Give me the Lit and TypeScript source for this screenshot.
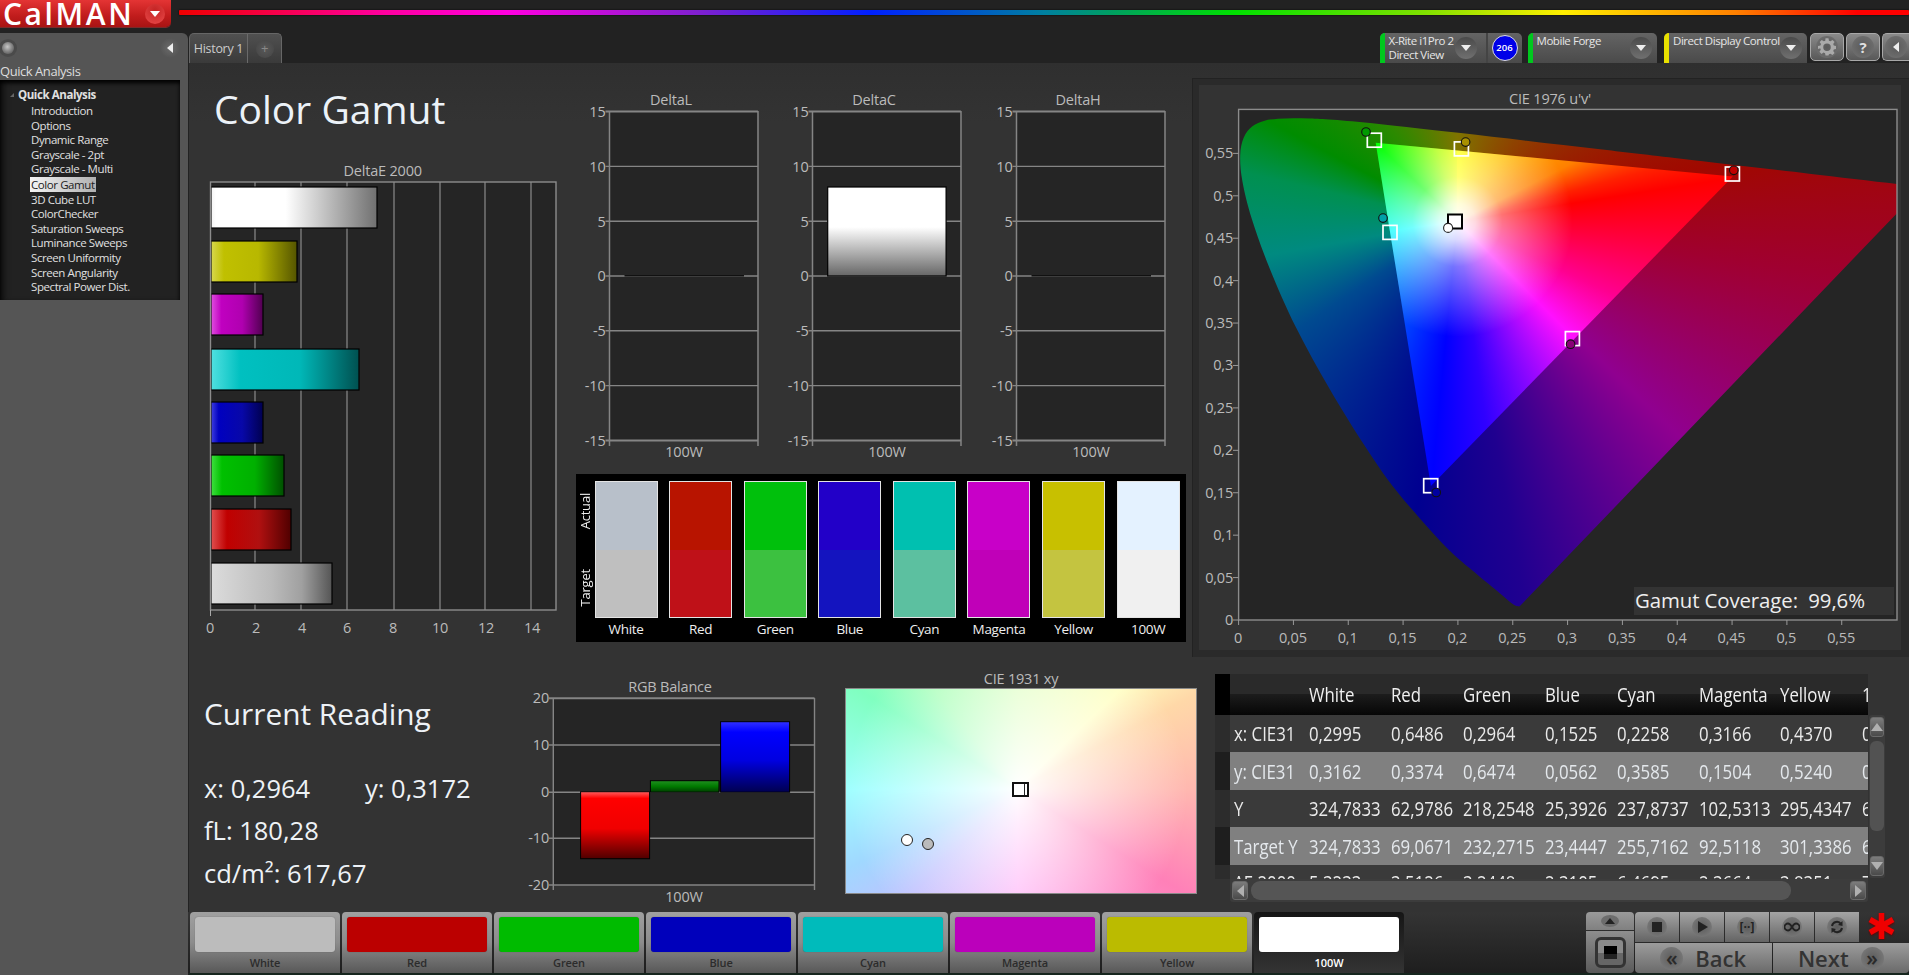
import { LitElement, html, svg, css } from "lit";
import { customElement } from "lit/decorators.js";

const TREE = ["Introduction","Options","Dynamic Range","Grayscale - 2pt","Grayscale - Multi","Color Gamut","3D Cube LUT","ColorChecker","Saturation Sweeps","Luminance Sweeps","Screen Uniformity","Screen Angularity","Spectral Power Dist."];

const BARS = [
  { id:"bw", y:187, r:377, s:[["0","#f4f4f4"],[".03","#fff"],[".45","#fff"],["1","#707070"]] },
  { id:"by", y:241, r:297, s:[["0","#d8d850"],[".15","#c0c000"],[".55","#b8b800"],["1","#555500"]] },
  { id:"bm", y:294, r:263, s:[["0","#e050e0"],[".2","#c000c0"],[".6","#b000b0"],["1","#500050"]] },
  { id:"bc", y:349, r:359, s:[["0","#50e0e0"],[".2","#00c0c0"],[".6","#00b8b8"],["1","#005050"]] },
  { id:"bb", y:402, r:263, s:[["0","#4040e0"],[".15","#0000c0"],[".6","#0808a8"],["1","#000050"]] },
  { id:"bg", y:455, r:284, s:[["0","#40e040"],[".15","#00c000"],[".6","#00b000"],["1","#005000"]] },
  { id:"br", y:509, r:291, s:[["0","#e05050"],[".2","#c00000"],[".6","#b01010"],["1","#500000"]] },
  { id:"bk", y:563, r:332, s:[["0","#dcdcdc"],[".5","#bbbbbb"],[".75","#a0a0a0"],["1","#555"]] },
];

const SWATCHES = [
  ["White","#b8c0ca","#bfbfbf"],["Red","#b81400","#bf1118"],["Green","#00c00c","#3cc140"],["Blue","#2200c8","#1414bf"],
  ["Cyan","#00c0b0","#5cc0a0"],["Magenta","#c800c8","#c000b8"],["Yellow","#c8c000","#c4c440"],["100W","#e4f2ff","#f0f0f0"],
];

const PATCHES = [["White","#bcbcbc"],["Red","#bb0000"],["Green","#00bb00"],["Blue","#0000bb"],["Cyan","#00bbbb"],["Magenta","#bb00bb"],["Yellow","#bbbb00"]];

const HEAD = ["","White","Red","Green","Blue","Cyan","Magenta","Yellow","100W"];
const ROWS = [
  ["x: CIE31","0,2995","0,6486","0,2964","0,1525","0,2258","0,3166","0,4370","0,2964"],
  ["y: CIE31","0,3162","0,3374","0,6474","0,0562","0,3585","0,1504","0,5240","0,3172"],
  ["Y","324,7833","62,9786","218,2548","25,3926","237,8737","102,5313","295,4347","617,6700"],
  ["Target Y","324,7833","69,0671","232,2715","23,4447","255,7162","92,5118","301,3386","617,6700"],
  ["ΔE 2000","5,3233","3,5126","3,2448","2,3105","6,4695","2,3664","3,8351","7,2000"],
];

// CIE 1931 spectral locus (x, y)
const LOCUS = [[.1741,.0050],[.1733,.0048],[.1714,.0051],[.1689,.0069],[.1644,.0109],[.1566,.0177],[.1440,.0297],[.1241,.0578],[.1096,.0868],[.0913,.1327],[.0687,.2007],[.0454,.2950],[.0235,.4127],[.0082,.5384],[.0039,.6548],[.0139,.7502],[.0389,.8120],[.0743,.8338],[.1142,.8262],[.1547,.8059],[.1929,.7816],[.2296,.7543],[.3016,.6923],[.3731,.6245],[.4441,.5547],[.5125,.4866],[.5752,.4242],[.6270,.3725],[.6915,.3083],[.7347,.2653]];
const PW = 658, PH = 510.6, UX = 1096.6, VY = 848.4;
const uvPx = (u: number, v: number): [number, number] => [u * UX, PH - v * VY];
const locusPts = LOCUS.map(([x, y]) => {
  const d = -2 * x + 12 * y + 3;
  return uvPx((4 * x) / d, ((9 * y) / d) * 1.008);
});
function smoothPath(p: [number, number][]) {
  let d = `M${p[0][0].toFixed(1)} ${p[0][1].toFixed(1)}`;
  for (let i = 0; i < p.length - 1; i++) {
    const a = p[Math.max(i - 1, 0)], b = p[i], c = p[i + 1], e = p[Math.min(i + 2, p.length - 1)];
    const c1 = [b[0] + (c[0] - a[0]) / 6, b[1] + (c[1] - a[1]) / 6];
    const c2 = [c[0] - (e[0] - b[0]) / 6, c[1] - (e[1] - b[1]) / 6];
    d += `C${c1[0].toFixed(1)} ${c1[1].toFixed(1)} ${c2[0].toFixed(1)} ${c2[1].toFixed(1)} ${c[0].toFixed(1)} ${c[1].toFixed(1)}`;
  }
  return d + "Z";
}
const HORSESHOE = smoothPath(locusPts);
const TRI = [uvPx(.4507,.5229), uvPx(.125,.5625), uvPx(.1754,.1579)].map(p => `${p[0].toFixed(1)} ${p[1].toFixed(1)}`);
const TRIPATH = `M${TRI[0]}L${TRI[1]}L${TRI[2]}Z`;

const SQUARES: [number, number, string][] = [[1374.3,140.2,"#fff"],[1461.4,148.9,"#fff"],[1732.4,174,"#fff"],[1390,232.4,"#fff"],[1572.4,338.6,"#fff"],[1430.7,485.7,"#fff"]];
const CIRCLES: [number, number, string][] = [[1366,132,"#009a00"],[1465.6,142.1,"#a89000"],[1733.8,170.3,"#c00000"],[1383,218.1,"#00a0a8"],[1570.6,344.2,"#8a0078"],[1436.2,492.5,"#0000a0"]];

const GAMUT_X = [0,.05,.1,.15,.2,.25,.3,.35,.4,.45,.5,.55];
const dec = (n: number) => String(+n.toFixed(2)).replace(".", ",");

function deltaChart(title: string, bar: boolean) {
  const x0 = 34.5, w = 148.5;
  const lines = [[15,111.6],[10,166.4],[5,221.2],[0,276],[-5,330.8],[-10,385.6],[-15,440.4]] as const;
  return html`<svg class="dchart" viewBox="0 85 203.4 380" width="203.4" height="380">
    <text class="lbl" x=${x0 + 61.5} y="105.5" text-anchor="middle">${title}</text>
    <rect x=${x0} y="111.6" width=${w} height="328.8" fill="#252525"></rect>
    ${lines.map(([v, y]) => svg`
      <line x1=${x0 - 4} x2=${x0 + w} y1=${y} y2=${y} stroke="#858585" stroke-width=${v === 15 || v === -15 ? 2 : 1.4}></line>
      <text class="lbl" x=${x0 - 4} y=${y + 5.5} text-anchor="end">${v}</text>`)}
    <line x1=${x0} x2=${x0} y1="111" y2="446" stroke="#858585" stroke-width="1.5"></line>
    <line x1=${x0 + w} x2=${x0 + w} y1="111" y2="446" stroke="#858585" stroke-width="1.5"></line>
    ${bar ? svg`<rect x=${x0 + 15.2} y="187" width="118.4" height="89" fill="url(#dc)" stroke="#000" stroke-width="1.2"></rect>`
          : svg`<line x1=${x0 + 15} x2=${x0 + 134.5} y1="275.8" y2="275.8" stroke="#111" stroke-width="1.4"></line>`}
    <text class="lbl" x=${x0 + 74.5} y="457" text-anchor="middle">100W</text>
    <defs><linearGradient id="dc" x1="0" y1="0" x2="0" y2="1"><stop offset="0" stop-color="#fff"></stop><stop offset=".45" stop-color="#fff"></stop><stop offset="1" stop-color="#666"></stop></linearGradient></defs>
  </svg>`;
}

@customElement("app-root")
export class AppRoot extends LitElement {
  static styles = css`
    :host { display:block; width:1909px; height:975px; background:#222; overflow:hidden; font-family:"Open Sans","Noto Sans",sans-serif; color:#ddd; }
    * { box-sizing:border-box; }
    .page { display:flex; flex-direction:column; height:975px; }
    .top { display:flex; height:33px; flex:none; }
    .logo { width:171px; height:27px; background:linear-gradient(#e43434,#c01c1c 60%,#a81414); border-radius:0 0 5px 0; display:flex; align-items:center; padding-left:3px; box-shadow:0 1px 0 #7a2a2a; }
    .logo b { font-size:30px; font-weight:600; letter-spacing:2.6px; color:#fff; line-height:27px; white-space:nowrap; }
    .logo i { margin-left:auto; margin-right:6px; width:20px; height:20px; border-radius:50%; background:radial-gradient(circle at 50% 30%,#c42424,#ea4a4a); display:flex; align-items:center; justify-content:center; }
    .logo i::after { content:""; border:5px solid transparent; border-top:6px solid #fff; border-bottom:0; }
    .rainbow { flex:1; margin:10px 0 0 8px; height:5px; border-radius:1px; background:linear-gradient(90deg,#f00000 0,#ff00a0 12%,#ff00e0 19%,#8020d0 30%,#0020ff 40%,#0080a0 50%,#00a060 54%,#00e000 61%,#80e000 72%,#ffee00 80%,#ff8000 90%,#ff0000 97%); box-shadow:0 0 2px #000; }
    .body { flex:1; display:flex; min-height:0; }
    .side { width:188px; flex:none; background:#555; border-radius:0 6px 0 0; }
    .side-tools { height:30px; display:flex; align-items:center; justify-content:space-between; padding:0 8px 0 0; }
    .ball { width:12px; height:12px; margin-left:2px; border-radius:50%; background:radial-gradient(circle at 45% 40%,#c8c8c8,#888 45%,#444); box-shadow:0 0 0 3px #4a4a4a; }
    .back { width:20px; height:20px; border-radius:50%; background:radial-gradient(circle,#6a6a6a,#4c4c4c); display:flex; align-items:center; justify-content:center; }
    .back::after { content:""; border:5.5px solid transparent; border-right:6px solid #eee; border-left:0; }
    .side h3 { margin:0; font-size:13px; font-weight:400; line-height:17px; height:17px; color:#ddd; letter-spacing:-.45px; white-space:nowrap; }
    .tree { width:180px; height:220px; background:#222; box-shadow:inset 0 3px 4px #000, inset 8px 0 6px -4px #111; padding:8px 0 0 10px; font-size:11.5px; line-height:14.6px; color:#e0e0e0; letter-spacing:-.42px; }
    .tree .h { font-weight:700; display:flex; align-items:center; gap:4px; margin-bottom:1.5px; white-space:nowrap; }
    .tree .h::before { content:""; border:2.5px solid transparent; border-right-color:#666; border-bottom-color:#666; }
    .tree .it { padding-left:21px; white-space:nowrap; }
    .tree .sel { display:inline-block; background:linear-gradient(90deg,#f4f4f4,#b0b0b0); color:#222; margin-left:-1px; padding:0 1px; line-height:15px; }

    .work { flex:1; min-width:0; display:flex; flex-direction:column; margin-left:1px; }
    .tabs { height:30px; flex:none; display:flex; }
    .htab { display:flex; height:30px; border:1px solid #666; border-bottom:0; border-radius:5px 5px 0 0; background:linear-gradient(#505050,#3a3a3a); font-size:12.5px; color:#ccc; letter-spacing:-.3px; }
    .htab span { width:58px; display:flex; align-items:center; justify-content:center; border-right:1px solid #6a6a6a; }
    .htab em { width:33px; display:flex; align-items:center; justify-content:center; }
    .htab em b { width:18px; height:18px; border-radius:50%; background:radial-gradient(circle,#585858,#444); font-weight:400; font-style:normal; font-size:13px; color:#888; line-height:17px; text-align:center; }
    .spacer { flex:1; }
    .dev { height:30px; margin-right:6px; border-radius:5px 5px 0 0; background:linear-gradient(#646464,#4a4a4a); display:flex; position:relative; overflow:hidden; font-size:11.5px; line-height:14px; color:#e6e6e6; letter-spacing:-.45px; }
    .dev .bar { width:5px; flex:none; }
    .dev .txt { padding:1px 0 0 4px; white-space:nowrap; flex:1; }
    .dd { width:22px; height:22px; flex:none; border-radius:50%; align-self:center; background:linear-gradient(#4a4a4a,#707070); display:flex; align-items:center; justify-content:center; }
    .dd::after { content:""; border:5.5px solid transparent; border-top:6px solid #eee; border-bottom:0; }
    .d1 { width:142px; } .d2 { width:129.5px; margin-right:7px; } .d3 { width:143px; margin-right:3px; }
    .d1 .dd { margin:0 9px 0 0; } .d2 .dd { margin-right:5px; } .d3 .dd { margin-right:5px; }
    .badge { width:36px; flex:none; border-left:2px solid #444; display:flex; align-items:center; justify-content:center; }
    .badge b { width:26px; height:26px; border-radius:50%; background:#0000e8; border:1px solid #ddd; color:#fff; font-size:9.5px; font-weight:600; display:flex; align-items:center; justify-content:center; letter-spacing:0; }
    .tool { width:34px; height:28px; margin-right:2px; border:1px solid #a8a8a8; border-radius:5px; background:linear-gradient(#8a8a8a,#585858); display:flex; align-items:center; justify-content:center; }
    .tool i { width:22px; height:22px; border-radius:50%; background:radial-gradient(circle,#5a5a5a,#747474); display:flex; align-items:center; justify-content:center; font-style:normal; font-weight:700; font-size:15px; color:#e0e0e0; }
    .tool.last { width:27px; margin-right:0; border-right:0; border-radius:5px 0 0 5px; }
    .tool.last i::after { content:""; border:5.5px solid transparent; border-right:6px solid #eee; border-left:0; }

    .main { flex:1; min-height:0; background:linear-gradient(#2f2f2f,#333 60px); border-left:1px solid #222; display:flex; flex-direction:column; margin-left:-1px; }
    .upper { height:594px; flex:none; display:flex; }
    .col-a { width:386px; flex:none; }
    .bigt { height:97px; font-size:39px; line-height:52px; padding:20px 0 0 25px; color:#ecf2f8; white-space:nowrap; }
    .col-a svg { display:block; margin-left:1px; }
    .col-b { width:617px; flex:none; padding-top:22px; }
    .dcharts { display:flex; height:380px; margin-bottom:9px; }
    svg text { font-family:"Open Sans","Noto Sans",sans-serif; }
    .lbl { font-size:14.5px; fill:#bbb; letter-spacing:-.2px; }
    .swbox { width:610px; height:168px; margin-left:1px; background:#000; display:flex; padding:7px 0 0 0; }
    .vl { width:18.5px; flex:none; height:137px; display:flex; flex-direction:column; justify-content:space-between; align-items:center; }
    .vl span { writing-mode:vertical-rl; transform:rotate(180deg); font-size:13px; line-height:13px; color:#eee; letter-spacing:-.2px; }
    .vl .a { margin-top:12px; } .vl .t { margin-bottom:12px; }
    .sw { width:63px; margin-right:11.6px; flex:none; display:flex; flex-direction:column; }
    .sw .chip { height:137px; border:1.5px solid #e4e4e4; display:flex; flex-direction:column; }
    .sw .chip i { flex:1; display:block; }
    .sw label { font-size:13.5px; line-height:23px; text-align:center; color:#eee; letter-spacing:-.35px; white-space:nowrap; }
    .col-c { flex:1; padding-top:15px; }
    .gframe { height:579px; background:#2a2a2a; border-top:1px solid #222; border-left:1px solid #222; padding:6px 8px 7px 6px; }
    .gframe svg { display:block; background:#333; }
    .fo-dark, .fo-bright { width:658px; height:511px; }
    .fo-dark { background:conic-gradient(from 0deg at 218.4px 112.6px,#7f7400 0deg,#a00800 78deg,#a00030 98deg,#900090 134deg,#200090 170deg,#000090 188deg,#004a90 236deg,#008a80 260deg,#009050 283deg,#008c00 298deg,#2a8a00 324deg,#7f7400 360deg); }
    .fo-bright { background:radial-gradient(circle at 218.4px 112.6px,#fff 0,rgba(255,255,255,.85) 18px,rgba(255,255,255,.45) 45px,rgba(255,255,255,0) 115px),conic-gradient(from 0deg at 218.4px 112.6px,#ffff00 3deg,#ffc000 35deg,#ff8000 63deg,#ff2000 75deg,#ff0000 81deg,#ff0090 115deg,#ff10ff 135deg,#3000ff 172deg,#0000ff 185.6deg,#0080ff 225deg,#00ffff 262deg,#00ff80 290deg,#00ff00 314deg,#b0ff00 345deg,#ffff00 363deg); }
    .cov { font-size:20.4px; fill:#eee; white-space:pre; letter-spacing:-.1px; }

    .lower { flex:1; min-height:0; display:flex; }
    .reading { width:321px; flex:none; padding:36.5px 0 0 15px; color:#eef2f6; }
    .reading h2 { margin:0 0 33px; font-size:29.8px; font-weight:400; line-height:40px; white-space:nowrap; }
    .reading div { font-size:25.5px; line-height:42.6px; display:flex; white-space:nowrap; }
    .reading div span { width:161px; flex:none; }
    .rgb { display:block; flex:none; }
    .cie { width:352px; flex:none; margin-left:15px; padding-top:13px; }
    .cie h4 { margin:0; font-size:14.5px; line-height:18px; font-weight:400; text-align:center; color:#bbb; letter-spacing:-.2px; }
    .ciebox { position:relative; height:206px; border:1.5px solid #8a8a8a; background:radial-gradient(circle at 49% 49%,#fff 0,rgba(255,255,255,.8) 30px,rgba(255,255,255,0) 170px),conic-gradient(from 0deg at 49% 49%,#ddffc0 0deg,#ffffc0 46deg,#ffd8a8 62deg,#ffb8b0 90deg,#ff80b8 122deg,#ffb0f8 180deg,#c0c0ff 225deg,#a0d8ff 245deg,#a0ffff 270deg,#80ffc0 302deg,#a8ffb8 320deg,#ddffc0 360deg); }
    .pin { position:absolute; }
    .p-sq { left:166px; top:92.5px; width:17px; height:15px; border:2px solid #111; background:linear-gradient(90deg,#fff 80%,#222 80%,#222 86%,#fff 86%); }
    .p-a { left:54.5px; top:144.5px; width:10px; height:10px; border-radius:50%; background:#fff; border:1.2px solid #222; box-sizing:content-box; }
    .p-b { left:76px; top:148.5px; width:10px; height:10px; border-radius:50%; background:#bbb; border:1.2px solid #222; box-sizing:content-box; }

    .tw { margin-left:18px; margin-top:17px; display:grid; grid-template-columns:653px 17px; grid-template-rows:205px 23px; }
    .tbl { overflow:hidden; font-size:20px; display:flex; flex-direction:column; }
    .row { display:flex; flex:none; align-items:center; }
    .row > b { width:15px; height:100%; flex:none; }
    .row > span { flex:none; white-space:nowrap; height:100%; display:flex; align-items:center; overflow:visible; }
    .row > span > u { text-decoration:none; display:inline-block; transform:scaleX(.84); transform-origin:0 50%; white-space:nowrap; }
    .row > span:nth-of-type(1){width:79px;padding-left:4.4px} .c1{width:81.5px}.c2{width:72.5px}.c3{width:81.8px}.c4{width:71.9px}.c5{width:81.9px}.c6{width:81.4px}.c7{width:82px}.c8{width:60px}
    .thead { height:41px; background:linear-gradient(#2a2a2a 0,#2a2a2a 48%,#1c1c1c 50%,#060606 100%); color:#f0f0f0; }
    .thead > b { background:#000; }
    .r0 { height:37px; background:#3a3a3a; color:#eaeaea; }
    .r1 { height:38px; background:#808080; color:#e4e8ec; }
    .rl { height:35px; background:#3a3a3a; color:#eaeaea; }
    .r0 > b, .rl > b { background:#2c2c2c; } .r1 > b { background:#1e1e1e; }
    .vs { margin:41px 0 0 1px; height:163px; background:#3c3c3c; border-radius:3px; display:flex; flex-direction:column; padding:2px 1px; }
    .sbtn { height:20px; flex:none; border:1px solid #6a6a6a; border-radius:3px; background:linear-gradient(#7c7c7c,#4a4a4a); display:flex; align-items:center; justify-content:center; }
    .up::after { content:""; border:6px solid transparent; border-bottom:8px solid #b0b0b0; border-top:0; }
    .dn::after { content:""; border:6px solid transparent; border-top:8px solid #b0b0b0; border-bottom:0; }
    .vth { display:block; margin:4px 0; height:90px; flex:none; background:#525252; border-radius:6px; }
    .vs .sp { flex:1; display:block; }
    .hs { margin-left:15px; height:23px; background:#3c3c3c; display:flex; padding:2px; gap:3px; border-radius:0 0 3px 3px; grid-column:1; }
    .hs .sbtn { width:16px; height:100%; }
    .lf::after { content:""; border:6px solid transparent; border-right:7px solid #b0b0b0; border-left:0; }
    .rt::after { content:""; border:6px solid transparent; border-left:7px solid #b0b0b0; border-right:0; }
    .hth { width:540px; flex:none; background:#555; border-radius:9px; }

    .foot { height:61px; flex:none; background:linear-gradient(#343434,#1e1e1e); display:flex; margin-left:-1px; padding-left:1px; }
    .patches { display:flex; gap:2px; flex:none; padding-left:1px; }
    .patch { width:150px; height:61px; border-radius:4px 4px 0 0; background:linear-gradient(#a0a0a0,#8c8c8c 50%,#585858); padding:5px 5px 0; display:flex; flex-direction:column; }
    .patch i { display:block; height:36px; border-radius:3px; box-shadow:0 0 1px #0006; }
    .patch span { font-size:11px; font-weight:600; line-height:21px; text-align:center; color:#2c2c2c; letter-spacing:-.1px; }
    .patch.on { background:linear-gradient(#151515,#343434); }
    .patch.on span { color:#fff; }
    .ctrl { width:323px; flex:none; margin-left:auto; display:flex; }
    .cl { width:48px; flex:none; margin-right:1px; display:flex; flex-direction:column; gap:1px; }
    .btn { background:linear-gradient(#a4a4a4,#646464); display:flex; align-items:center; justify-content:center; color:#333; }
    .cl .a { height:18px; border-radius:4px 4px 0 0; background:linear-gradient(#9a9a9a,#808080); }
    .cl .b { flex:1; border-radius:0 0 4px 4px; background:linear-gradient(#8e8e8e,#5a5a5a); }
    .knob { width:20px; height:20px; border-radius:50%; background:radial-gradient(circle,#5c5c5c,#808080); display:flex; align-items:center; justify-content:center; flex:none; font-size:12px; line-height:20px; font-weight:700; color:#222; }
    .kup { width:18px; height:12px; border-radius:50%; background:#6c6c6c; display:flex; align-items:center; justify-content:center; }
    .kup::after { content:""; border:5px solid transparent; border-bottom:6px solid #222; border-top:0; }
    .sbig { width:31px; height:31px; border:3px solid #333; border-radius:6px; background:linear-gradient(#8a8a8a 50%,#666 50%); display:flex; align-items:center; justify-content:center; }
    .sbig::after { content:""; width:13px; height:13px; background:linear-gradient(#000 60%,#222 60%); }
    .cr { flex:1; display:flex; flex-direction:column; gap:1px; }
    .r-a { height:30px; display:flex; gap:1px; flex:none; }
    .r-a .btn { width:44px; border-radius:0; }
    .r-a .btn:first-child { border-radius:4px 0 0 0; }
    .star { margin-left:8px; display:block; }
    .r-b { flex:1; display:flex; gap:1px; }
    .r-b .btn { width:136.5px; border-radius:0 0 0 4px; font-size:22px; font-weight:600; gap:12px; color:#333; background:linear-gradient(#9c9c9c,#6a6a6a); }
    .r-b .btn:last-child { border-radius:0 0 4px 0; }
    .r-b .knob { font-size:21px; font-weight:600; line-height:19px; width:23px; height:23px; color:#2a2a2a; }
    .strip { height:2px; flex:none; background:#16261e; }
  `;

  private tbl() {
    return html`<div class="tbl">
      <div class="row thead"><b></b>${HEAD.map((h, i) => html`<span class=${"c" + i}><u>${h}</u></span>`)}</div>
      ${ROWS.map((r, ri) => html`<div class=${"row " + (ri === 4 ? "rl" : ri % 2 ? "r1" : "r0")}>
        <b></b>${r.map((v, i) => html`<span class=${"c" + i}><u>${v}</u></span>`)}</div>`)}
    </div>`;
  }

  render() {
    return html`<div class="page">
      <div class="top">
        <div class="logo"><b>CalMAN</b><i></i></div>
        <div class="rainbow"></div>
      </div>
      <div class="body">
        <aside class="side">
          <div class="side-tools"><span class="ball"></span><span class="back"></span></div>
          <h3>Quick Analysis</h3>
          <div class="tree">
            <div class="h">Quick Analysis</div>
            ${TREE.map(t => html`<div class="it">${t === "Color Gamut" ? html`<span class="sel">${t}</span>` : t}</div>`)}
          </div>
        </aside>
        <div class="work">
          <div class="tabs">
            <div class="htab"><span>History 1</span><em><b>+</b></em></div>
            <div class="spacer"></div>
            <div class="dev d1"><i class="bar" style="background:#00c81e"></i><div class="txt">X-Rite i1Pro 2<br />Direct View</div><span class="dd"></span><div class="badge"><b>206</b></div></div>
            <div class="dev d2"><i class="bar" style="background:#00c81e"></i><div class="txt">Mobile Forge</div><span class="dd"></span></div>
            <div class="dev d3"><i class="bar" style="background:#e8e000"></i><div class="txt">Direct Display Control</div><span class="dd"></span></div>
            <div class="tool"><i><svg width="18" height="18" viewBox="0 0 24 24"><path fill="#aaa" fill-rule="evenodd" d="M10 1h4l.6 3.2 2 .8L19.3 3.2l2.8 2.8-1.8 2.7.8 2 3.2.6v4l-3.2.6-.8 2 1.8 2.7-2.8 2.8-2.7-1.8-2 .8L14 24h-4l-.6-3.2-2-.8-2.7 1.8-2.8-2.8 1.8-2.7-.8-2L0 15.2v-4l3.2-.6.8-2L2.200 6l2.800-2.800L7.700 5l2-.8zM12 8a5 5 0 1 0 0 10 5 5 0 0 0 0-10z" transform="translate(0 -.6)"></path></svg></i></div>
            <div class="tool"><i>?</i></div>
            <div class="tool last"><i></i></div>
          </div>
          <div class="main">
            <div class="upper">
              <section class="col-a">
                <div class="bigt">Color Gamut</div>
                <svg viewBox="190 160 380 490" width="380" height="490">
                  <defs>${BARS.map(b => svg`<linearGradient id=${b.id}>${b.s.map(([o, c]) => svg`<stop offset=${o} stop-color=${c}></stop>`)}</linearGradient>`)}</defs>
                  <text class="lbl" x="382.7" y="176" text-anchor="middle">DeltaE 2000</text>
                  <rect x="210.5" y="182" width="345.5" height="428" fill="#252525"></rect>
                  ${[255,301,347,394,440,485,531].map(x => svg`<line x1=${x} x2=${x} y1="182" y2="610" stroke="#7c7c7c" stroke-width="1.4"></line>`)}
                  ${BARS.map(b => svg`<rect x="211" y=${b.y} width=${b.r - 211} height="41" fill=${"url(#" + b.id + ")"} stroke="#000" stroke-width="1.2"></rect>`)}
                  <rect x="210.5" y="182" width="345.5" height="428" fill="none" stroke="#8c8c8c" stroke-width="1.4"></rect>
                  <line x1="210.500" x2="210.500" y1="610" y2="616" stroke="#aaa" stroke-width="1"></line>
                  ${[[0,210],[2,256],[4,302],[6,347],[8,393],[10,440],[12,486],[14,532]].map(([v, x]) => svg`<text class="lbl" x=${x} y="632.500" text-anchor="middle">${v}</text>`)}
                </svg>
              </section>
              <section class="col-b">
                <div class="dcharts">${deltaChart("DeltaL", false)}${deltaChart("DeltaC", true)}${deltaChart("DeltaH", false)}</div>
                <div class="swbox">
                  <div class="vl"><span class="a">Actual</span><span class="t">Target</span></div>
                  ${SWATCHES.map(([n, a, t]) => html`<div class="sw"><div class="chip"><i style=${"background:" + a}></i><i style=${"background:" + t}></i></div><label>${n}</label></div>`)}
                </div>
              </section>
              <section class="col-c">
                <div class="gframe">
                  <svg viewBox="1199 85 702 565" width="702" height="565">
                    <text class="lbl" x="1550" y="104" text-anchor="middle">CIE 1976 u'v'</text>
                    <rect x="1238.600" y="109.400" width="658.400" height="510.600" fill="#252525"></rect>
                    <foreignObject x="1238.6" y="109.4" width="658" height="511">
                      <div class="fo-dark" style=${`clip-path:path('${HORSESHOE}')`}></div>
                    </foreignObject>
                    <foreignObject x="1238.6" y="109.4" width="658" height="511">
                      <div class="fo-bright" style=${`clip-path:path('${TRIPATH}')`}></div>
                    </foreignObject>
                    <rect x="1238.600" y="109.400" width="658.400" height="510.600" fill="none" stroke="#8c8c8c" stroke-width="1.4"></rect>
                    ${GAMUT_X.map((u, i) => svg`
                      <line x1=${1238.6 + u * UX} x2=${1238.6 + u * UX} y1="620" y2="625" stroke="#999" stroke-width="1"></line>
                      <text class="lbl" x=${1238 + u * UX} y="643" text-anchor="middle">${dec(GAMUT_X[i])}</text>`)}
                    ${GAMUT_X.map(v => svg`
                      <line x1="1233" x2="1238.6" y1=${620 - v * VY} y2=${620 - v * VY} stroke="#999" stroke-width="1"></line>
                      <text class="lbl" x="1233" y=${625 - v * VY} text-anchor="end">${dec(v)}</text>`)}
                    ${SQUARES.map(([x, y, c]) => svg`<rect x=${x - 7} y=${y - 7} width="14" height="14" fill="none" stroke=${c} stroke-width="1.7"></rect>`)}
                    <rect x="1448" y="214.500" width="14" height="14" fill="#fff" stroke="#000" stroke-width="2"></rect>
                    <circle cx="1448.100" cy="227.900" r="4.500" fill="#fff" stroke="#222" stroke-width="1.100"></circle>
                    ${CIRCLES.map(([x, y, c]) => svg`<circle cx=${x} cy=${y} r="4.300" fill=${c} stroke="#111" stroke-width="1.100"></circle>`)}
                    <rect x="1634" y="587" width="260" height="28" fill="#333"></rect>
                    <text class="cov" x="1635" y="608">Gamut Coverage:  99,6%</text>
                  </svg>
                </div>
              </section>
            </div>
            <div class="lower">
              <section class="reading">
                <h2>Current Reading</h2>
                <div><span>x: 0,2964</span>y: 0,3172</div>
                <div>fL: 180,28</div>
                <div>cd/m²: 617,67</div>
              </section>
              <svg class="rgb" viewBox="510 657 320 255" width="320" height="255">
                <defs>
                  <linearGradient id="gr" x1="0" y1="0" x2="0" y2="1"><stop offset="0" stop-color="#ff6060"></stop><stop offset=".1" stop-color="#ff0000"></stop><stop offset=".55" stop-color="#f00000"></stop><stop offset="1" stop-color="#500000"></stop></linearGradient>
                  <linearGradient id="gg" x1="0" y1="0" x2="0" y2="1"><stop offset="0" stop-color="#209020"></stop><stop offset=".5" stop-color="#007a00"></stop><stop offset="1" stop-color="#003c00"></stop></linearGradient>
                  <linearGradient id="gb" x1="0" y1="0" x2="0" y2="1"><stop offset="0" stop-color="#3030ff"></stop><stop offset=".15" stop-color="#0000ff"></stop><stop offset=".55" stop-color="#0000e0"></stop><stop offset="1" stop-color="#000050"></stop></linearGradient>
                </defs>
                <text class="lbl" x="670" y="691.500" text-anchor="middle">RGB Balance</text>
                <rect x="553.300" y="698.300" width="261.200" height="186.700" fill="#252525"></rect>
                ${[[20,698.3],[10,745],[0,792.3],[-10,838.3],[-20,885]].map(([v, y]) => svg`
                  <line x1="549" x2="814.500" y1=${y} y2=${y} stroke="#858585" stroke-width=${v === 20 ? 2 : 1.4}></line>
                  <text class="lbl" x="549" y=${y + 5} text-anchor="end">${v}</text>`)}
                <line x1="553.300" x2="553.300" y1="698" y2="890" stroke="#858585" stroke-width="1.400"></line>
                <line x1="814.500" x2="814.500" y1="698" y2="890" stroke="#858585" stroke-width="1.400"></line>
                <rect x="580.600" y="791.700" width="69" height="67" fill="url(#gr)" stroke="#000" stroke-width="1"></rect>
                <rect x="650.400" y="780.700" width="68.600" height="11.500" fill="url(#gg)" stroke="#000" stroke-width="1"></rect>
                <rect x="720.600" y="721.700" width="69" height="70.500" fill="url(#gb)" stroke="#000" stroke-width="1"></rect>
                <text class="lbl" x="684" y="902" text-anchor="middle">100W</text>
              </svg>
              <section class="cie">
                <h4>CIE 1931 xy</h4>
                <div class="ciebox"><span class="pin p-sq"></span><span class="pin p-a"></span><span class="pin p-b"></span></div>
              </section>
              <div class="tw">
                ${this.tbl()}
                <div class="vs"><i class="sbtn up"></i><i class="vth"></i><i class="sp"></i><i class="sbtn dn"></i></div>
                <div class="hs"><i class="sbtn lf"></i><i class="hth"></i><span class="spacer"></span><i class="sbtn rt"></i></div>
              </div>
            </div>
          </div>
          <div class="foot">
            <div class="patches">
              ${PATCHES.map(([n, c]) => html`<div class="patch"><i style=${"background:" + c}></i><span>${n}</span></div>`)}
              <div class="patch on"><i style="background:#fff"></i><span>100W</span></div>
            </div>
            <div class="ctrl">
              <div class="cl">
                <div class="btn a"><span class="kup"></span></div>
                <div class="btn b"><span class="sbig"></span></div>
              </div>
              <div class="cr">
                <div class="r-a">
                  <div class="btn"><span class="knob"><svg width="10" height="10"><rect width="10" height="10" fill="#222"></rect></svg></span></div>
                  <div class="btn"><span class="knob"><svg width="11" height="12"><polygon points="1,0 11,6 1,12" fill="#222"></polygon></svg></span></div>
                  <div class="btn"><span class="knob">[··]</span></div>
                  <div class="btn"><span class="knob"><svg width="16" height="10" viewBox="0 0 16 10" fill="none" stroke="#222" stroke-width="1.8"><path d="M8 5C6.500 2.500 5.500 1.500 4 1.500a3.500 3.500 0 0 0 0 7C5.500 8.500 6.500 7.500 8 5c1.500-2.500 2.500-3.500 4-3.500a3.500 3.500 0 0 1 0 7C10.500 8.500 9.500 7.500 8 5z"></path></svg></span></div>
                  <div class="btn"><span class="knob"><svg width="14" height="14" viewBox="0 0 14 14" fill="none" stroke="#222" stroke-width="2"><path d="M2 6a5 5 0 0 1 9-2"></path><path d="M12 8a5 5 0 0 1-9 2"></path><polygon points="12.500,1 12.500,6 8,5" fill="#222" stroke="none"></polygon><polygon points="1.500,13 1.500,8 6,9" fill="#222" stroke="none"></polygon></svg></span></div>
                  <svg class="star" width="27" height="28" viewBox="0 0 27 28"><g stroke="#f00000" stroke-width="5.500" filter="drop-shadow(0 1px 1px #600)"><line x1="13.500" y1="1" x2="13.500" y2="27"></line><line x1="2" y1="7.500" x2="25" y2="20.500"></line><line x1="25" y1="7.500" x2="2" y2="20.500"></line></g></svg>
                </div>
                <div class="r-b">
                  <div class="btn"><span class="knob">«</span>Back</div>
                  <div class="btn">Next<span class="knob">»</span></div>
                </div>
              </div>
            </div>
          </div>
          <div class="strip"></div>
        </div>
      </div>
    </div>`;
  }
}
